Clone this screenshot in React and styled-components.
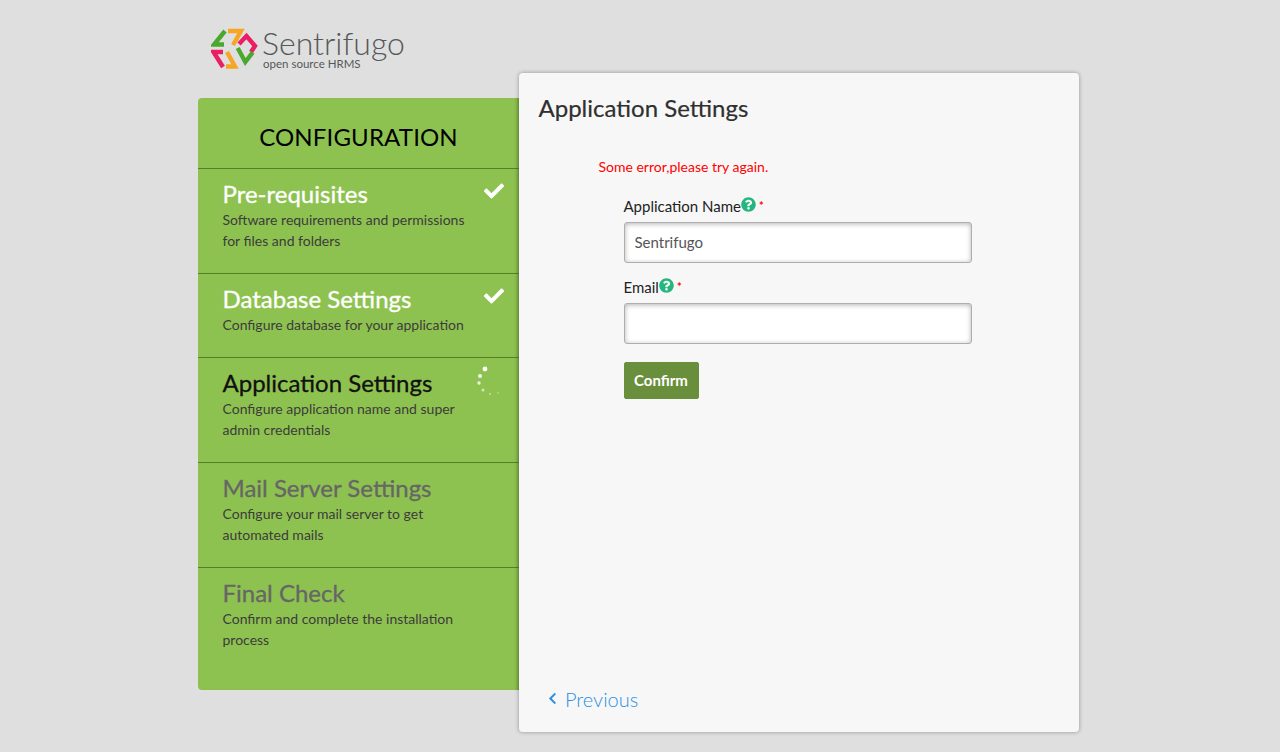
import React from 'react';
import styled, { createGlobalStyle } from 'styled-components';
import { FaCheck, FaChevronLeft, FaQuestionCircle } from 'react-icons/fa';

const Global = createGlobalStyle`
  html, body { margin: 0; padding: 0; background: #dfdfdf; }
  body { font-family: Lato, "Liberation Sans", sans-serif; color: #333; height: 752px; overflow: hidden; }
  * { box-sizing: border-box; }
`;

const Shell = styled.div`
  width: 881px;
  margin-left: 198px;
  display: grid;
  grid-template-columns: 321px 560px;
  grid-template-rows: 73px 659px;
`;
const Header = styled.header`
  grid-column: 1 / -1;
  display: flex;
  align-items: flex-start;
  gap: 4px;
  padding: 27px 0 0 13px;
`;
const LogoWords = styled.div`
  display: flex;
  flex-direction: column;
  padding-top: 2px;
`;
const LogoName = styled.div`
  font-size: 32px;
  font-weight: 300;
  line-height: 28px;
  color: #55585a;
`;
const LogoTag = styled.div`
  font-size: 11.5px;
  line-height: 12px;
  margin-top: 1px;
  font-weight: 400;
  color: #55585a;
  padding-left: 1px;
`;
const Sidebar = styled.aside`
  margin-top: 25px;
  height: 592px;
  background: #8ec250;
  border-radius: 4px 0 0 4px;
  box-shadow: inset -4px 0 4px -3px rgba(80,110,40,.5);
`;
const SideTitle = styled.h1`
  margin: 0;
  height: 70px;
  font-size: 24px;
  line-height: 78px;
  font-weight: 400;
  letter-spacing: 0.15px;
  text-align: center;
  color: #000;
`;
const Step = styled.section`
  position: relative;
  height: ${p => p.$h}px;
  border-top: 1px solid #55802a;
  padding: 9px 50px 0 24.5px;
`;
const StepName = styled.h2`
  margin: 0;
  font-size: 24px;
  line-height: 31px;
  font-weight: 400;
  -webkit-text-stroke: 0.3px ${p => p.$c};
  color: ${p => p.$c};
`;
const StepText = styled.p`
  margin: 0;
  font-size: 14px;
  line-height: 21px;
  color: #3c3c3c;
`;
const Done = styled(FaCheck)`
  position: absolute;
  right: 15px;
  top: 12px;
  width: 20px;
  height: 20px;
  color: #fff;
`;
const Spinner = styled.svg`
  position: absolute;
  right: 18px;
  top: 7px;
  width: 26px;
  height: 32px;
`;
const Main = styled.main`
  position: relative;
  background: #f7f7f7;
  border-radius: 4px;
  box-shadow: 0 0 4px rgba(0,0,0,.35);
  padding: 20px 19.5px 0;
  display: flex;
  flex-direction: column;
`;
const Heading = styled.h2`
  margin: 0;
  font-size: 24px;
  line-height: 30px;
  font-weight: 400;
  -webkit-text-stroke: 0.2px #2f2f2f;
  color: #2f2f2f;
`;
const ErrorText = styled.div`
  margin: 34px 0 0 60px;
  font-size: 14px;
  line-height: 20px;
  color: #f00;
`;
const Form = styled.form`
  margin: 18px 0 0 85px;
  display: flex;
  flex-direction: column;
  align-items: flex-start;
`;
const Field = styled.div`
  margin-bottom: 13px;
`;
const Label = styled.label`
  display: flex;
  align-items: flex-start;
  height: 27px;
  font-size: 15px;
  line-height: 22px;
  color: #222;
`;
const Help = styled(FaQuestionCircle)`
  width: 15px;
  height: 15px;
  margin: 2px 0 0 0;
  color: #25b67f;
`;
const Star = styled.span`
  color: #f00;
  font-size: 11px;
  font-weight: 700;
  line-height: 22px;
  margin-left: 3px;
`;
const Input = styled.input`
  display: block;
  width: 348px;
  height: 41px;
  border: 1px solid #aeaeae;
  border-radius: 3px;
  background: #fff;
  box-shadow: inset 0 1px 5px rgba(0,0,0,.3);
  padding: 0 10px 2px;
  font: 15px Lato, sans-serif;
  color: #555;
`;
const Confirm = styled.button`
  width: 75px;
  height: 37px;
  margin-top: 5px;
  border: 1px solid #6a8f3c;
  border-radius: 2px;
  background: #6a8f3c;
  color: #fff;
  font: 700 15px Lato, sans-serif;
  padding: 0 0 2px;
`;
const Previous = styled.a`
  position: absolute;
  left: 29px;
  bottom: 20px;
  display: flex;
  align-items: center;
  gap: 8px;
  font-size: 20px;
  font-weight: 300;
  line-height: 26px;
  color: #2b90e0;
`;
const PrevIcon = styled(FaChevronLeft)`
  width: 9px;
  height: 13px;
  margin-top: -2px;
`;

const Logo = () => (
  <svg width="47" height="42" viewBox="0 0 47 42" fill="none" strokeWidth="4.4" strokeLinejoin="miter">
    <path d="M14 4 L3 17.5 H13" stroke="#4ba82e" />
    <path d="M17 4 H30 L22 18" stroke="#f5a623" />
    <path d="M28 17 L35.5 9 L44 19 L40 25" stroke="#e91e63" />
    <path d="M26.7 21 L34.3 35 L41.7 25.3" stroke="#4ba82e" />
    <path d="M12 25 H2.5 L12 40" stroke="#e91e63" />
    <path d="M16 25 L24 39.5 H15" stroke="#f5a623" />
  </svg>
);

const spinDots = [[10,4,2.4,1],[5,11,2,.9],[4,18,1.7,.8],[8,25,1.5,.6],[15,29,1.1,.4],[23,28,1,.3]];

const steps = [
  { h: 105, name: 'Pre-requisites', color: '#fff', text: ['Software requirements and permissions', 'for files and folders'], state: 'done' },
  { h: 84, name: 'Database Settings', color: '#fff', text: ['Configure database for your application'], state: 'done' },
  { h: 105, name: 'Application Settings', color: '#111', text: ['Configure application name and super', 'admin credentials'], state: 'spin' },
  { h: 105, name: 'Mail Server Settings', color: '#666', text: ['Configure your mail server to get', 'automated mails'] },
  { h: 123, name: 'Final Check', color: '#666', text: ['Confirm and complete the installation', 'process'] },
];

export default function App() {
  return (
    <Shell>
      <Global />
      <Header>
        <Logo />
        <LogoWords>
          <LogoName>Sentrifugo</LogoName>
          <LogoTag>open source HRMS</LogoTag>
        </LogoWords>
      </Header>
      <Sidebar>
        <SideTitle>CONFIGURATION</SideTitle>
        {steps.map(s => (
          <Step key={s.name} $h={s.h}>
            <StepName $c={s.color}>{s.name}</StepName>
            <StepText>{s.text[0]}{s.text[1] && <br />}{s.text[1]}</StepText>
            {s.state === 'done' && <Done />}
            {s.state === 'spin' && (
              <Spinner viewBox="0 0 26 32">
                {spinDots.map(([x, y, r, o]) => <circle key={x + '-' + y} cx={x} cy={y} r={r} fill="#fff" opacity={o} />)}
              </Spinner>
            )}
          </Step>
        ))}
      </Sidebar>
      <Main>
        <Heading>Application Settings</Heading>
        <ErrorText>Some error,please try again.</ErrorText>
        <Form>
          <Field>
            <Label>Application Name<Help /><Star>*</Star></Label>
            <Input defaultValue="Sentrifugo" />
          </Field>
          <Field>
            <Label>Email<Help /><Star>*</Star></Label>
            <Input />
          </Field>
          <Confirm type="button">Confirm</Confirm>
        </Form>
        <Previous><PrevIcon />Previous</Previous>
      </Main>
    </Shell>
  );
}
